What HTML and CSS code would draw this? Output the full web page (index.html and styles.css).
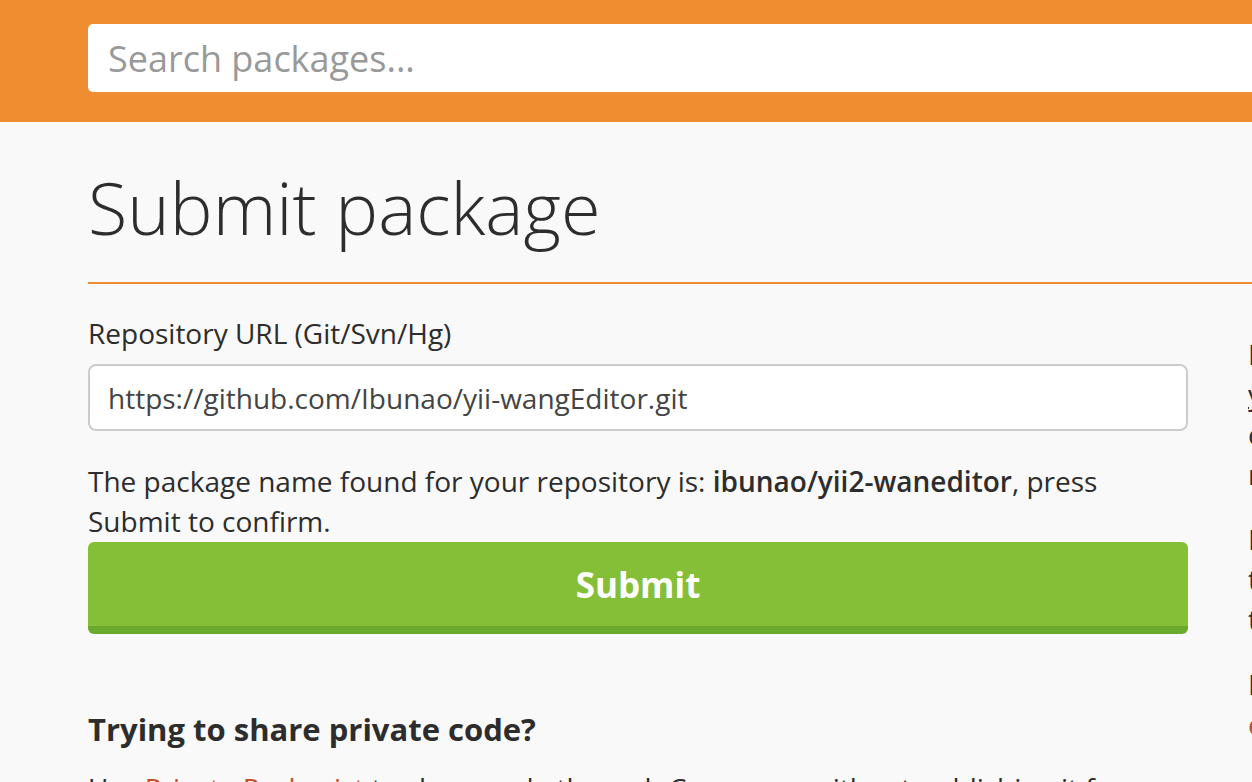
FILE: index.html
```html
<!DOCTYPE html>
<html lang="en">
<head>
<meta charset="utf-8">
<title>Submit package - Packagist</title>
<link rel="stylesheet" href="styles.css">
</head>
<body>
<header class="topbar">
  <div class="container">
    <input class="search" type="text" placeholder="Search packages...">
  </div>
</header>
<main class="container">
  <h1 class="page-title">Submit package</h1>
  <div class="columns">
    <section class="main-col">
      <form class="submit-form">
        <label class="field-label" for="repo">Repository URL (Git/Svn/Hg)</label>
        <input id="repo" class="field-input" type="text" value="https://github.com/Ibunao/yii-wangEditor.git">
        <p class="notice">The package name found for your repository is: <strong>ibunao/yii2-waneditor</strong>, press Submit to confirm.</p>
        <button class="btn-submit" type="button">Submit</button>
      </form>
      <h3 class="private-title">Trying to share private code?</h3>
      <p class="private-text">Use <a href="#">Private Packagist</a> to share code through Composer without publishing it for everyone on Packagist.org.</p>
    </section>
    <aside class="side-col">
      <p>Please make sure you have read the package<br><a class="ul" href="#">your package naming conventions</a><br>carefully before submitting your package,<br>requiring it will be easier for others.</p>
      <p>Do not submit forks of existing packages,<br>the original packages can be patched,<br>test changes with VCS repositories.</p>
      <p>If you need help or have questions,<br><a class="orange" href="#">email the Composer community</a></p>
    </aside>
  </div>
</main>
</body>
</html>
```
FILE: styles.css
```css
* { box-sizing: border-box; }
html, body { margin: 0; padding: 0; }
body {
  background: #f9f9f9;
  color: #2d2d2d;
  font-family: "Open Sans", "Liberation Sans", sans-serif;
  font-size: 28px;
  line-height: 40px;
  overflow: hidden;
  width: 1252px;
  height: 782px;
}
.container {
  margin-left: 88px;
  width: 1800px;
}
.topbar {
  background: #f08d31;
  height: 122px;
  padding-top: 24px;
}
.search {
  display: block;
  width: 100%;
  height: 68px;
  border: none;
  border-radius: 5px;
  background: #fff;
  padding: 0 20px;
  font-family: "Open Sans", "Liberation Sans", sans-serif;
  font-size: 36px;
  color: #333;
  outline: none;
}
.search::placeholder { color: #999; }
.page-title {
  margin: 0;
  padding-top: 42px;
  padding-bottom: 32px;
  font-size: 72px;
  line-height: 86px;
  font-weight: 300;
  border-bottom: 2px solid #f08d31;
}
.columns {
  display: flex;
  gap: 60px;
}
.main-col { width: 1100px; flex: none; }
.side-col { width: 640px; flex: none; padding-top: 50px; }
.submit-form { padding-top: 29px; }
.field-label { display: block; margin-bottom: 11px; }
.field-input {
  display: block;
  width: 100%;
  height: 67px;
  border: 2px solid #ccc;
  border-radius: 8px;
  background: #fff;
  padding: 0 18px;
  font-family: "Open Sans", "Liberation Sans", sans-serif;
  font-size: 28px;
  color: #444;
}
.notice { margin: 30px 0 0; }
.notice strong { font-weight: 600; }
.btn-submit {
  display: block;
  width: 100%;
  height: 92px;
  margin-top: 1px;
  border: none;
  border-bottom: 8px solid #6aa92d;
  border-radius: 6px;
  background: #85bf38;
  color: #fff;
  font-family: "Open Sans", "Liberation Sans", sans-serif;
  font-size: 35px;
  font-weight: 700;
  padding: 0;
}
.private-title {
  margin: 75px 0 0;
  font-size: 31px;
  line-height: 40px;
  font-weight: 700;
}
.private-text { margin: 19px 0 0; }
.private-text a { color: #c0502d; text-decoration: none; }
.side-col p { margin: 0 0 25px; white-space: nowrap; }
.side-col a { color: #2d2d2d; }
.side-col a.ul { text-decoration: underline; }
.side-col a.orange { color: #c0502d; text-decoration: none; }
```
